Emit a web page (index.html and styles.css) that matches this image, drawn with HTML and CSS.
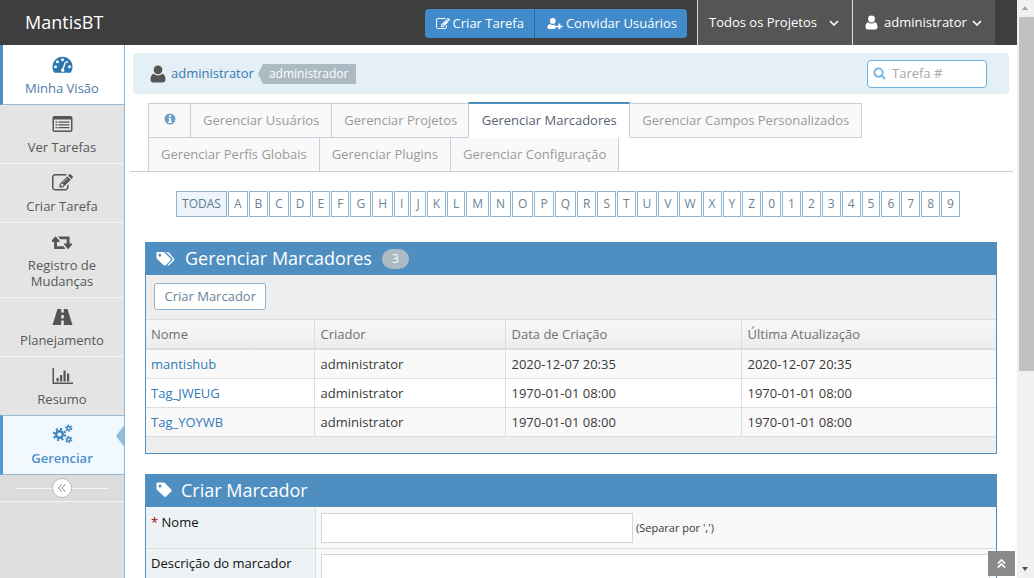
FILE: index.html
```html
<!DOCTYPE html>
<html lang="pt-BR">
<head>
    <meta charset="UTF-8">
    <title>Gerenciar Marcadores - MantisBT</title>
    <link rel="stylesheet" href="styles.css">
</head>
<body>
    <div class="viewport">
        <div class="page">
            <header class="navbar">
                <a class="brand">MantisBT</a>
                <div class="nav-buttons">
                    <a class="nav-btn">
                        <svg class="ico-14" viewBox="0 128 1792 1536"><path fill="currentColor" d="M888 1184l116-116-152-152-116 116v56h96v96h56zM1328 464q-16-16-33 1l-350 350q-17 17-1 33t33-1l350-350q17-17 1-33zM1408 1058v190q0 119-84.500 203.500t-203.500 84.500h-832q-119 0-203.500-84.500t-84.500-203.500v-832q0-119 84.500-203.500t203.500-84.500h832q63 0 117 25 15 7 18 23 3 17-9 29l-49 49q-14 14-32 8-23-6-45-6h-832q-66 0-113 47t-47 113v832q0 66 47 113t113 47h832q66 0 113-47t47-113v-126q0-13 9-22l64-64q15-15 35-7t20 29zM1312 320l288 288-672 672h-288v-288zM1756 452l-92 92-288-288 92-92q28-28 68-28t68 28l152 152q28 28 28 68t-28 68z"/></svg>
                        Criar Tarefa</a>
                    <a class="nav-btn">
                        <svg class="ico-18" viewBox="0 0 18 14"><path fill="currentColor" d="M6.500.8a3.200 3.200 0 0 1 3.200 3.300A3.200 3.200 0 0 1 6.500 7.300a3.200 3.200 0 0 1-3.200-3.200A3.200 3.200 0 0 1 6.500.8zM3 7.500c1 .8 2.200 1.200 3.500 1.200 1 0 1.900-.2 2.700-.7v2h3v1.500H9.200v1.800H2.500C1.200 13.300.5 12.500.5 11.300.5 9.500 1.200 8 3 7.500zM13 7h2v2.500h2.500v1.700H15v2.300h-2v-2.300h-2.500V9.500H13z"/></svg>
                        Convidar Usuários</a>
                </div>
                <a class="nav-item nav-projects">Todos os Projetos
                    <svg class="chev" viewBox="0 0 10 6"><path fill="none" stroke="currentColor" stroke-width="1.600" d="M1 1l4 4 4-4"/></svg>
                </a>
                <a class="nav-item nav-user">
                    <svg class="ico-user" viewBox="0 0 13 15"><path fill="currentColor" d="M6.500.5a3.400 3.400 0 0 1 3.400 3.600 3.400 3.400 0 0 1-6.800 0A3.400 3.400 0 0 1 6.500.5zM3.100 7.200c.9.800 2.100 1.200 3.400 1.200s2.500-.4 3.400-1.200c1.900.4 2.600 2.400 2.600 4.800 0 1.500-.9 2.500-2.300 2.500H2.800C1.400 14.500.5 13.500.5 12c0-2.400.7-4.400 2.600-4.800z"/></svg>
                    administrator
                    <svg class="chev" viewBox="0 0 10 6"><path fill="none" stroke="currentColor" stroke-width="1.600" d="M1 1l4 4 4-4"/></svg>
                </a>
            </header>

            <div class="layout">
                <nav class="sidebar">
                    <a class="side-item current">
                        <svg class="side-icon" viewBox="0 0 21 18"><path fill="#2e76ae" d="M10.500.8C4.900.8.500 5.200.500 10.800c0 2 .6 3.900 1.600 5.500.2.300.5.400.8.400h15.200c.3 0 .6-.1.800-.4 1-1.600 1.600-3.500 1.600-5.500C20.500 5.200 16.100.8 10.500.8z"/><g fill="#fff"><circle cx="10.500" cy="3.800" r="1.500"/><circle cx="5.500" cy="5.800" r="1.500"/><circle cx="3.500" cy="10.800" r="1.500"/><circle cx="17.500" cy="10.800" r="1.500"/><circle cx="15" cy="6" r="1"/><path d="M12.800 5.800l1.300.5-2.400 6.600c.8.800.8 1.900.3 2.800H9.500c-.8-1.200-.4-3 1.100-3.600z"/></g></svg>
                        <span>Minha Visão</span>
                    </a>
                    <a class="side-item">
                        <svg class="side-icon" viewBox="0 0 21 18"><path fill="#555" d="M2.500 1h16c1.100 0 2 .9 2 2v12c0 1.100-.9 2-2 2h-16c-1.100 0-2-.9-2-2V3c0-1.100.9-2 2-2z"/><path fill="#e4e4e4" d="M2 4.500h17V15c0 .3-.2.500-.5.500h-16A.5.500 0 0 1 2 15z"/><path fill="#555" d="M3.500 6.500h2v1.200h-2zM6.500 6.500h11v1.200h-11zM3.500 9.300h2v1.200h-2zM6.500 9.300h11v1.200h-11zM3.500 12.100h2v1.200h-2zM6.500 12.100h11v1.200h-11z"/></svg>
                        <span>Ver Tarefas</span>
                    </a>
                    <a class="side-item">
                        <svg class="side-icon" viewBox="0 128 1792 1536"><path fill="#555" d="M888 1184l116-116-152-152-116 116v56h96v96h56zM1328 464q-16-16-33 1l-350 350q-17 17-1 33t33-1l350-350q17-17 1-33zM1408 1058v190q0 119-84.500 203.500t-203.500 84.500h-832q-119 0-203.500-84.500t-84.500-203.500v-832q0-119 84.500-203.500t203.500-84.500h832q63 0 117 25 15 7 18 23 3 17-9 29l-49 49q-14 14-32 8-23-6-45-6h-832q-66 0-113 47t-47 113v832q0 66 47 113t113 47h832q66 0 113-47t47-113v-126q0-13 9-22l64-64q15-15 35-7t20 29zM1312 320l288 288-672 672h-288v-288zM1756 452l-92 92-288-288 92-92q28-28 68-28t68 28l152 152q28 28 28 68t-28 68z"/></svg>
                        <span>Criar Tarefa</span>
                    </a>
                    <a class="side-item">
                        <svg class="side-icon" viewBox="0 128 1920 1536"><path fill="#555" d="M1216 1504q0 13-9.500 22.500t-22.500 9.500h-960q-8 0-13.500-2t-9-7-5.500-6.500-3.500-11-1-11.500v-600h-192q-26 0-45-19t-19-45q0-24 15-41l320-384q19-22 49-22t49 22l320 384q15 17 15 41 0 26-19 45t-45 19h-192v384h576q16 0 25 11l160 192q7 11 7 21zM1856 1088q0 24-15 41l-320 384q-20 23-49 23t-49-23l-320-384q-15-17-15-41 0-26 19-45t45-19h192v-384h-576q-16 0-25-12l-160-192q-7-9-7-20 0-13 9.500-22.500t22.500-9.500h960q8 0 13.500 2t9 7 5.500 6.500 3.500 11 1 11.500v600h192q26 0 45 19t19 45z"/></svg>
                        <span>Registro de<br>Mudanças</span>
                    </a>
                    <a class="side-item">
                        <svg class="side-icon" viewBox="0 0 21 18"><path fill="#555" d="M5.500 1h3.700v3.500h2.600V1h3.700L20.500 17h-8.700v-4.500H9.200V17H.5zM9.200 7v3.500h2.600V7z"/></svg>
                        <span>Planejamento</span>
                    </a>
                    <a class="side-item">
                        <svg class="side-icon" viewBox="0 0 21 18"><path fill="#555" d="M.5 1H2v14.500h19V17H.5zM4.500 11h2.200v3.500H4.500zM8 8h2.200v6.500H8zM11.500 3.500h2.200v11h-2.200zM15 6.500h2.200v8H15z"/></svg>
                        <span>Resumo</span>
                    </a>
                    <a class="side-item active">
                        <svg class="side-icon gears" viewBox="0 0 22 20" fill="none" stroke="#3d83bd">
                            <circle cx="7.800" cy="10.500" r="3.500" stroke-width="2.600"/>
                            <circle cx="7.800" cy="10.500" r="5.900" stroke-width="2.200" stroke-dasharray="2.300 2.330"/>
                            <circle cx="17.500" cy="4" r="1.800" stroke-width="1.600"/>
                            <circle cx="17.500" cy="4" r="3.200" stroke-width="1.400" stroke-dasharray="1.700 1.650"/>
                            <circle cx="17.500" cy="15.800" r="1.800" stroke-width="1.600"/>
                            <circle cx="17.500" cy="15.800" r="3.200" stroke-width="1.400" stroke-dasharray="1.700 1.650"/>
                        </svg>
                        <span>Gerenciar</span>
                    </a>
                    <div class="side-toggle">
                        <span class="toggle-btn">
                            <svg viewBox="0 0 10 10"><path fill="none" stroke="#888" stroke-width="1" d="M5 1L1.500 5 5 9M8.500 1L5 5l3.500 4"/></svg>
                        </span>
                    </div>
                </nav>

                <main class="content">
                    <div class="breadcrumbs">
                        <div class="crumb-left">
                            <svg class="crumb-user" viewBox="0 0 16 18"><path fill="#555" d="M8 .5a4.300 4.300 0 0 1 4.300 4.500A4.300 4.300 0 0 1 8 9.300 4.300 4.300 0 0 1 3.700 5 4.300 4.300 0 0 1 8 .5zM3.800 8.800C4.900 9.800 6.400 10.400 8 10.400s3.100-.6 4.200-1.600c2.300.5 3.300 3 3.300 5.800 0 1.800-1.100 2.900-2.800 2.900H3.300C1.600 17.500.5 16.400.5 14.600c0-2.800 1-5.300 3.300-5.800z"/></svg>
                            <a class="link">administrator</a>
                            <span class="role-tag">administrador</span>
                        </div>
                        <div class="search-box">
                            <svg viewBox="0 0 14 14"><path fill="none" stroke="#6fb3e0" stroke-width="2" d="M6 1.500a4.500 4.500 0 1 0 0 9 4.500 4.500 0 0 0 0-9zM9.300 9.300l3.700 3.700"/></svg>
                            <span>Tarefa #</span>
                        </div>
                    </div>

                    <div class="tabs-wrap">
                        <ul class="tabs">
                            <li class="tab tab-info"><svg viewBox="0 0 12 12"><circle cx="6" cy="6" r="5.500" fill="#6f9fc8"/><path fill="#fff" d="M5 2.300h2v1.800H5zM4.500 5h2.500v3.600h.8V10H4.300V8.600h.9V6.300h-.7z"/></svg></li>
                            <li class="tab">Gerenciar Usuários</li>
                            <li class="tab">Gerenciar Projetos</li>
                            <li class="tab current">Gerenciar Marcadores</li>
                            <li class="tab">Gerenciar Campos Personalizados</li>
                            <li class="tab second">Gerenciar Perfís Globais</li>
                            <li class="tab second">Gerenciar Plugins</li>
                            <li class="tab second">Gerenciar Configuração</li>
                        </ul>
                    </div>

                    <div class="letters">
                        <a class="letter selected">TODAS</a>
                        <a class="letter">A</a><a class="letter">B</a><a class="letter">C</a><a class="letter">D</a><a class="letter">E</a><a class="letter">F</a><a class="letter">G</a><a class="letter">H</a><a class="letter">I</a><a class="letter">J</a><a class="letter">K</a><a class="letter">L</a><a class="letter">M</a><a class="letter">N</a><a class="letter">O</a><a class="letter">P</a><a class="letter">Q</a><a class="letter">R</a><a class="letter">S</a><a class="letter">T</a><a class="letter">U</a><a class="letter">V</a><a class="letter">W</a><a class="letter">X</a><a class="letter">Y</a><a class="letter">Z</a><a class="letter">0</a><a class="letter">1</a><a class="letter">2</a><a class="letter">3</a><a class="letter">4</a><a class="letter">5</a><a class="letter">6</a><a class="letter">7</a><a class="letter">8</a><a class="letter">9</a>
                    </div>

                    <section class="widget">
                        <h4 class="widget-title">
                            <svg class="tags-icon" viewBox="0 0 20 16"><path fill="#fff" d="M1.500.500h6c.5 0 1 .2 1.400.6l6.300 6.300c.6.600.6 1.500 0 2.100l-5 5c-.6.600-1.500.6-2.100 0L1.100 7.900C.7 7.500.5 7 .5 6.500v-5c0-.6.400-1 1-1zM4 2.500a1.500 1.500 0 1 0 0 3 1.500 1.500 0 0 0 0-3z"/><path fill="#fff" d="M10.500.5h1.700c.5 0 1 .2 1.400.6l5.300 6.300c.6.600.6 1.500 0 2.100l-5 5c-.5.500-1.300.6-1.900.1l5.100-5.300c.6-.6.600-1.500 0-2.100z"/></svg>
                            Gerenciar Marcadores
                            <span class="count">3</span>
                        </h4>
                        <div class="widget-toolbar">
                            <a class="btn-white">Criar Marcador</a>
                        </div>
                        <table class="tags-table">
                            <thead>
                                <tr><th class="col-name">Nome</th><th class="col-creator">Criador</th><th class="col-date">Data de Criação</th><th>Última Atualização</th></tr>
                            </thead>
                            <tbody>
                                <tr><td><a class="link">mantishub</a></td><td>administrator</td><td>2020-12-07 20:35</td><td>2020-12-07 20:35</td></tr>
                                <tr><td><a class="link">Tag_JWEUG</a></td><td>administrator</td><td>1970-01-01 08:00</td><td>1970-01-01 08:00</td></tr>
                                <tr><td><a class="link">Tag_YOYWB</a></td><td>administrator</td><td>1970-01-01 08:00</td><td>1970-01-01 08:00</td></tr>
                            </tbody>
                        </table>
                        <div class="widget-footer"></div>
                    </section>

                    <section class="widget form-widget">
                        <h4 class="widget-title">
                            <svg class="tag-icon" viewBox="0 0 16 16"><path fill="#fff" d="M1.500.500h6c.5 0 1 .2 1.400.6l6.300 6.300c.6.600.6 1.500 0 2.100l-5 5c-.6.600-1.500.6-2.100 0L1.100 7.900C.7 7.500.5 7 .5 6.500v-5c0-.6.400-1 1-1zM4 2.500a1.500 1.500 0 1 0 0 3 1.500 1.500 0 0 0 0-3z"/></svg>
                            Criar Marcador
                        </h4>
                        <div class="form-row">
                            <div class="form-label"><span class="req">*</span> Nome</div>
                            <div class="form-field"><span class="input"></span><small>(Separar por ',')</small></div>
                        </div>
                        <div class="form-row">
                            <div class="form-label">Descrição do marcador</div>
                            <div class="form-field"><span class="input wide"></span></div>
                        </div>
                    </section>
                </main>
            </div>
            <a class="back-top">
                <svg viewBox="0 0 12 12"><path fill="none" stroke="#fff" stroke-width="1.800" d="M2 6l4-4 4 4M2 10.500l4-4 4 4"/></svg>
            </a>
        </div>
        <div class="scrollbar">
            <span class="arrow up"></span>
            <span class="thumb"></span>
            <span class="arrow down"></span>
        </div>
    </div>
</body>
</html>
```

FILE: styles.css
```css
* {
    box-sizing: border-box;
}

html, body {
    margin: 0;
    height: 100%;
    overflow: hidden;
}

body {
    font-family: 'Open Sans', sans-serif;
    font-size: 13px;
    line-height: 1.5;
    color: #393939;
    background: #fff;
}

.viewport {
    display: flex;
    height: 578px;
}

.page {
    position: relative;
    flex: 1;
    min-width: 0;
    overflow: hidden;
}

/* barra de rolagem */
.scrollbar {
    width: 17px;
    background: #f1f1f1;
    display: flex;
    flex-direction: column;
    align-items: stretch;
}

.thumb {
    display: block;
    height: 354px;
    margin: 0 0 0 2px;
    background: #c1c1c1;
}

.arrow {
    display: block;
    height: 17px;
    position: relative;
}

.arrow.down {
    margin-top: auto;
}

.arrow::after {
    content: "";
    position: absolute;
    left: 5px;
    top: 6px;
    border-left: 3.5px solid transparent;
    border-right: 3.5px solid transparent;
}

.arrow.up::after {
    border-bottom: 4px solid #a3a3a3;
}

.arrow.down::after {
    border-top: 4px solid #505050;
}

/* navbar */
.navbar {
    height: 45px;
    background: #3e3e3e;
    color: #fff;
    display: flex;
    align-items: stretch;
}

.brand {
    font-size: 18px;
    line-height: 45px;
    padding-left: 25px;
    margin-right: auto;
}

.nav-buttons {
    display: flex;
    align-self: flex-start;
    margin: 9px 10px 0 0;
    height: 29px;
}

.nav-btn {
    display: flex;
    align-items: center;
    gap: 3px;
    height: 29px;
    padding: 0 10px 0 11px;
    background: #428bca;
    font-size: 13px;
}

.nav-btn:first-child {
    border-radius: 4px 0 0 4px;
    border-right: 1px solid #2b6798;
}

.nav-btn:last-child {
    padding-left: 12px;
    border-radius: 0 4px 4px 0;
}

.ico-14 {
    width: 14px;
    height: 12px;
}

.ico-18 {
    width: 16px;
    height: 13px;
}

.nav-item {
    display: flex;
    align-items: center;
    background: #555;
    border-left: 1px solid #ddd;
    font-size: 13px;
    white-space: nowrap;
}

.nav-projects {
    width: 155px;
    padding-left: 11px;
    gap: 12px;
}

.nav-user {
    width: 143px;
    padding-left: 12px;
    gap: 6px;
    margin-right: 22px;
}

.nav-user .chev {
    margin-left: -1px;
}

.chev {
    width: 10px;
    height: 6px;
}

.ico-user {
    width: 13px;
    height: 15px;
}

/* barra lateral */
.layout {
    display: flex;
    height: 533px;
}

.sidebar {
    width: 125px;
    flex: none;
    background: #e0e0e0;
    border-right: 1px solid #92bcd9;
    height: 533px;
}

.side-item {
    position: relative;
    display: flex;
    flex-direction: column;
    align-items: center;
    height: 59px;
    padding-top: 10px;
    border-bottom: 1px solid #f4f4f4;
    color: #585858;
    background: #e4e4e4;
    text-align: center;
    line-height: 16px;
}

.side-item span {
    margin-top: 6px;
}

.side-item:nth-child(4) {
    height: 75px;
}

.side-item:nth-child(6) {
    height: 58px;
    border-bottom: 0;
}

.side-item.current {
    height: 60px;
    padding: 11px 3px 0 0;
    background: #fff;
    color: #4a7ba8;
    border-bottom-color: #92bcd9;
    border-left: 3px solid #4f8ec0;
}

.side-item.active {
    height: 60px;
    padding: 8px 3px 0 0;
    background: #f1f9ff;
    color: #4b8fcb;
    font-weight: 600;
    border-top: 1px solid #92bcd9;
    border-bottom-color: #92bcd9;
    border-left: 3px solid #4b9ad2;
}

.side-item.active::after {
    content: "";
    position: absolute;
    right: -1px;
    top: 8px;
    border: 12px solid transparent;
    border-left: 0;
    border-right: 9px solid #92bcd9;
}

.side-icon {
    width: 21px;
    height: 18px;
}

.side-icon.gears {
    height: 20px;
}

.side-toggle {
    position: relative;
    height: 27px;
    border-bottom: 1px solid #f4f4f4;
    background: #dcdcdc;
    display: flex;
    justify-content: center;
    align-items: center;
}

.side-toggle::before {
    content: "";
    position: absolute;
    left: 15px;
    right: 15px;
    top: 13px;
    height: 1px;
    background: #f4f4f4;
}

.toggle-btn {
    position: relative;
    width: 20px;
    height: 20px;
    border: 1px solid #bbb;
    border-radius: 50%;
    background: #fff;
    display: flex;
    align-items: center;
    justify-content: center;
}

.toggle-btn svg {
    width: 10px;
    height: 10px;
}

/* conteudo */
.content {
    flex: 1;
    min-width: 0;
    padding: 8px 8px 0 8px;
}

.breadcrumbs {
    display: flex;
    justify-content: space-between;
    align-items: center;
    height: 41px;
    padding: 0 22px 0 17px;
    background: #e4eff6;
    border-radius: 4px;
}

.crumb-left {
    display: flex;
    align-items: center;
}

.crumb-user {
    width: 16px;
    height: 18px;
    margin-right: 5px;
}

.link {
    color: #337ab7;
}

.role-tag {
    position: relative;
    margin-left: 9px;
    padding: 0 8px 0 6px;
    height: 20px;
    line-height: 20px;
    font-size: 12px;
    color: #fff;
    background: #abbac3;
}

.role-tag::before {
    content: "";
    position: absolute;
    left: -5px;
    top: 0;
    border-style: solid;
    border-width: 10px 5px 10px 0;
    border-color: transparent #abbac3;
}

.search-box {
    display: flex;
    align-items: center;
    gap: 6px;
    width: 120px;
    height: 28px;
    padding-left: 5px;
    background: #fff;
    border: 1px solid #6fb3e0;
    border-radius: 4px;
    color: #a8a8a8;
}

.search-box svg {
    width: 13px;
    height: 13px;
}

.tabs-wrap {
    margin: 10px -4px 0 -3px;
    padding: 0 13px 0 18px;
    border-bottom: 1px solid #c5d0dc;
}

.tabs {
    list-style: none;
    margin: 0;
    padding: 0;
    display: flex;
    flex-wrap: wrap;
}

.tab {
    height: 35px;
    padding: 7px 12px 0;
    margin-right: -1px;
    margin-top: -1px;
    color: #999;
    background: #f9f9f9;
    border: 1px solid #c5d0dc;
    line-height: 19px;
}

.tab-info {
    width: 43px;
    padding: 9px 0 0 15px;
}

.tab-info svg {
    width: 12px;
    height: 12px;
    display: block;
}

.tab.current {
    padding: 7px 12.500px 0;
    margin-left: -1px;
    color: #576373;
    background: #fff;
    border-top: 2px solid #4c8fbd;
    border-bottom-color: #fff;
    margin-top: -2px;
    height: 36px;
    position: relative;
}

.tab.second {
    height: 34px;
    border-bottom: 0;
}

.letters {
    display: flex;
    justify-content: center;
    gap: 1px;
    margin-top: 19px;
    padding-right: 6px;
}

.letter {
    height: 26px;
    padding: 0 5px;
    font-size: 12px;
    line-height: 24px;
    text-align: center;
    color: #6a8295;
    border: 1px solid #8db4d2;
    background: #fff;
}

.letter.selected {
    background: #eef4f9;
    color: #5b7a91;
}

/* widgets */
.widget {
    margin: 25px 12px 0 12px;
    border: 1px solid #4f8ec0;
    border-top: 0;
}

.form-widget {
    margin-top: 20px;
}

.widget-title {
    display: flex;
    align-items: center;
    height: 33px;
    margin: 0 -1px;
    padding-left: 11px;
    background: #4f8ec0;
    color: #fff;
    font-size: 18px;
    font-weight: 400;
}

.tags-icon {
    width: 19px;
    height: 16px;
    margin-right: 10px;
}

.tag-icon {
    width: 16px;
    height: 16px;
    margin-right: 9px;
}

.count {
    margin-left: 10px;
    width: 27px;
    height: 20px;
    line-height: 20px;
    border-radius: 10px;
    background: #abbac3;
    font-size: 12px;
    text-align: center;
}

.widget-toolbar {
    height: 45px;
    padding: 8px;
    background: #eee;
    border-bottom: 1px solid #ddd;
}

.btn-white {
    display: inline-block;
    height: 27px;
    padding: 0 9.5px;
    line-height: 25px;
    color: #6a8295;
    background: #fff;
    border: 1px solid #8db4d2;
    border-radius: 3px;
}

.tags-table {
    width: 100%;
    border-collapse: collapse;
    table-layout: fixed;
}

.tags-table th, .tags-table td {
    height: 29px;
    padding: 2px 5px 0 6px;
    text-align: left;
    font-weight: 400;
    border: 1px solid #ddd;
}

.tags-table th:first-child, .tags-table td:first-child {
    padding-left: 5px;
    border-left: 0;
}

.tags-table th:last-child, .tags-table td:last-child {
    border-right: 0;
}

.tags-table thead tr {
    background: linear-gradient(#f8f8f8, #ececec);
    color: #707070;
}

.tags-table th {
    border-top: 0;
    border-bottom: 2px solid #ddd;
}

.tags-table tbody tr:nth-child(odd) {
    background: #f9f9f9;
}

.col-name {
    width: 168px;
}

.col-creator {
    width: 191px;
}

.col-date {
    width: 236px;
}

.widget-footer {
    height: 16px;
    background: #eee;
}

.form-row {
    display: flex;
    height: 41px;
    border-bottom: 1px solid #ddd;
    background: #f8f8f8;
}

.form-row:nth-child(2) {
    height: 42px;
    padding-top: 1px;
}

.form-label {
    width: 170px;
    padding: 5px 5px 0 5px;
    color: #111;
    background: #edf2f5;
    border-right: 1px solid #ddd;
    flex: none;
}

.req {
    color: #a00;
}

.form-field {
    flex: 1;
    display: flex;
    align-items: flex-start;
    padding-top: 5px;
    padding-left: 5px;
    gap: 3px;
}

.form-field small {
    font-size: 11px;
    line-height: 30px;
}

.input {
    display: block;
    width: 312px;
    height: 30px;
    background: #fff;
    border: 1px solid #d5d5d5;
}

.input.wide {
    width: 669px;
    height: 60px;
}

.back-top {
    position: absolute;
    right: 2px;
    bottom: 2px;
    width: 27px;
    height: 25px;
    background: #8a8a8a;
    display: flex;
    align-items: center;
    justify-content: center;
}

.back-top svg {
    width: 11px;
    height: 11px;
}
```
